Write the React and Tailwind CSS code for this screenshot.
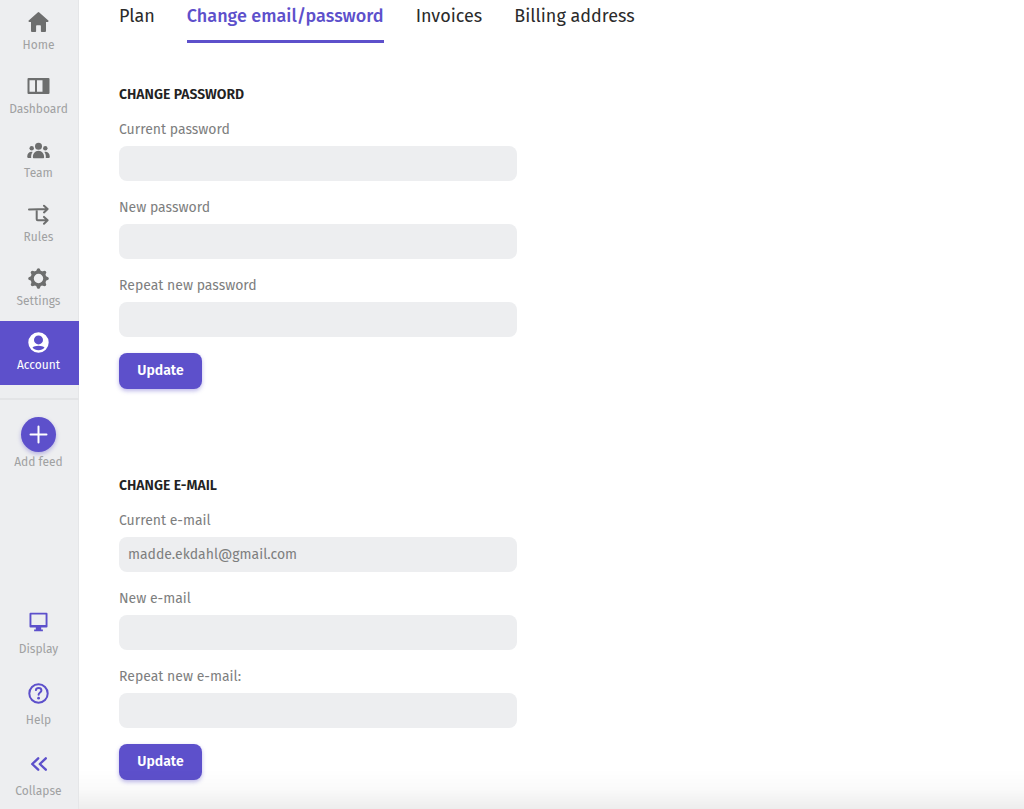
import React, { useId } from "react";

function HomeIcon() {
  return (
    <svg width="21" height="21" viewBox="0 0 21 21" fill="currentColor" aria-hidden="true">
      <path d="M9.7 .4a1.2 1.2 0 0 1 1.600 0l9 8c.6.6.3 1.500-.5 1.500H18v9.200a1 1 0 0 1-1 1h-3.300a.8.8 0 0 1-.8-.8v-5.200a.8.8 0 0 0-.8-.8H8.900a.8.8 0 0 0-.8.8v5.200a.8.8 0 0 1-.8.8H4a1 1 0 0 1-1-1V9.900H1.200c-.8 0-1.100-.9-.5-1.500z" />
    </svg>
  );
}

function DashboardIcon() {
  return (
    <svg width="23" height="20" viewBox="0 0 23 20" fill="currentColor" aria-hidden="true">
      <path
        fillRule="evenodd"
        d="M1.500 2h20a1 1 0 0 1 1 1v14a1 1 0 0 1-1 1h-20a1 1 0 0 1-1-1V3a1 1 0 0 1 1-1zM2.500 4.300v11.400H8V4.300zM10 4.300v11.400h5.500V4.300z"
      />
    </svg>
  );
}

function TeamIcon() {
  return (
    <svg width="23" height="20" viewBox="0 -1 23 20" fill="currentColor" aria-hidden="true">
      <circle cx="11.500" cy="5.200" r="3.500" />
      <circle cx="4.700" cy="7.300" r="2.200" />
      <circle cx="18.300" cy="7.300" r="2.200" />
      <path d="M5.900 16.200C5.700 12.800 8 9.800 11.500 9.800s5.800 3 5.600 6.400c0 .7-.4 1-1 1H6.900c-.6 0-1-.3-1-1z" />
      <path d="M5.600 10.900C3 10.300.2 12 .2 15.700c0 .8.4 1.200 1 1.200h3c-.2-2.400.2-4.400 1.400-6z" />
      <path d="M17.400 10.900c2.600-.6 5.400 1.100 5.400 4.800 0 .8-.4 1.200-1 1.200h-3c.2-2.400-.2-4.400-1.400-6z" />
    </svg>
  );
}

function RulesIcon() {
  return (
    <svg
      width="21"
      height="21"
      viewBox="0 0 21 21"
      fill="none"
      stroke="currentColor"
      strokeWidth="2"
      strokeLinecap="round"
      strokeLinejoin="round"
      aria-hidden="true"
    >
      <path d="M1 5.500 19.500 5M16 1.700 19.600 5 16 8.400M8.700 5.500v9.800a1 1 0 0 0 1 1h9.800M16 12.900l3.600 3.400-3.600 3.400" />
    </svg>
  );
}

function SettingsIcon() {
  return (
    <svg width="21" height="21" viewBox="-10.500 -10.500 21 21" fill="currentColor" aria-hidden="true">
      <circle r="6.300" fill="none" stroke="currentColor" strokeWidth="3.200" />
      {[0, 45, 90, 135, 180, 225, 270, 315].map((angle) => (
        <path
          key={angle}
          transform={`rotate(${angle})`}
          d="M-2.600-6.800-1.300-9.700Q0-10.900 1.300-9.700L2.600-6.800z"
        />
      ))}
    </svg>
  );
}

function AccountIcon() {
  return (
    <svg width="21" height="21" viewBox="0 0 21 21" fill="currentColor" aria-hidden="true">
      <path
        fillRule="evenodd"
        d="M10.500.3a10.200 10.200 0 1 1 0 20.400 10.200 10.200 0 0 1 0-20.400zM10.500 3.400a4.500 4.500 0 1 0 0 9 4.500 4.500 0 0 0 0-9zM4.500 15.600c1.300 1.700 3.500 2.700 6 2.700s4.700-1 6-2.700c-1-1.200-3.500-1.900-6-1.900s-5 .7-6 1.900z"
      />
    </svg>
  );
}

function PlusIcon() {
  return (
    <svg
      width="19"
      height="19"
      viewBox="0 0 19 19"
      stroke="currentColor"
      strokeWidth="2"
      strokeLinecap="round"
      aria-hidden="true"
    >
      <path d="M9.500 1.500v16M1.500 9.500h16" />
    </svg>
  );
}

function DisplayIcon() {
  return (
    <svg width="19" height="20" viewBox="0 0 19 20" fill="currentColor" aria-hidden="true">
      <path
        fillRule="evenodd"
        d="M1.500.7h16a1 1 0 0 1 1 1v12.800a1 1 0 0 1-1 1h-5.300v1.900h1.700v1.900H5.100v-1.900h1.700v-1.900H1.500a1 1 0 0 1-1-1V1.700a1 1 0 0 1 1-1zM2.400 2.600v10.400h14.200V2.600z"
      />
    </svg>
  );
}

function HelpIcon() {
  return (
    <svg
      width="21"
      height="21"
      viewBox="0 0 21 21"
      fill="none"
      stroke="currentColor"
      strokeWidth="2"
      strokeLinecap="round"
      aria-hidden="true"
    >
      <circle cx="10.500" cy="10.500" r="9.200" />
      <path d="M7.900 7.100c.2-1.200 1.200-2 2.700-2 1.600 0 2.800.9 2.800 2.400 0 2-2.800 2-2.800 4.200" />
      <circle cx="10.600" cy="15.200" r="1.400" fill="currentColor" stroke="none" />
    </svg>
  );
}

function CollapseIcon() {
  return (
    <svg
      width="19"
      height="20"
      viewBox="0 0 19 20"
      fill="none"
      stroke="currentColor"
      strokeWidth="2.400"
      strokeLinecap="round"
      strokeLinejoin="round"
      aria-hidden="true"
    >
      <path d="M9.200 4.300 3.200 10l6 5.700M16.800 4.300l-6 5.700 6 5.700" />
    </svg>
  );
}

const navItems = [
  { label: "Home", Icon: HomeIcon },
  { label: "Dashboard", Icon: DashboardIcon },
  { label: "Team", Icon: TeamIcon },
  { label: "Rules", Icon: RulesIcon },
  { label: "Settings", Icon: SettingsIcon },
  { label: "Account", Icon: AccountIcon, active: true },
];

const footerItems = [
  { label: "Display", Icon: DisplayIcon },
  { label: "Help", Icon: HelpIcon },
  { label: "Collapse", Icon: CollapseIcon },
];

const tabs = ["Plan", "Change email/password", "Invoices", "Billing address"];

function Sidebar() {
  return (
    <aside className="flex w-[79px] shrink-0 flex-col bg-[#edeef0] text-xs leading-4 shadow-[inset_-1px_0_0_#e5e6e8]">
      <nav aria-label="Main" className="flex flex-col pt-px">
        {navItems.map(({ label, Icon, active }) => (
          <a
            key={label}
            href="#"
            aria-current={active ? "page" : undefined}
            className={
              active
                ? "flex h-16 flex-col items-center gap-[5px] bg-[#5d50cb] pt-[11px] pr-0.5 text-white"
                : "flex h-16 flex-col items-center gap-[5px] pt-[11px] pr-0.5 text-[#6d6e6e]"
            }
          >
            <span className="flex h-5 items-center">
              <Icon />
            </span>
            <span className={active ? "text-white" : "text-[#a0a1a2]"}>{label}</span>
          </a>
        ))}
      </nav>
      <div className="mt-[13px] flex flex-col items-center border-t-2 border-[#e3e4e6] pt-[17px] pr-0.5">
        <button type="button" className="flex flex-col items-center text-[#a0a1a2]">
          <span className="flex size-[35px] items-center justify-center rounded-full bg-[#5d50cb] text-white shadow-[0_2px_4px_rgba(93,80,203,0.4)]">
            <PlusIcon />
          </span>
          <span className="mt-0.5">Add feed</span>
        </button>
      </div>
      <div className="mt-auto flex flex-col gap-[26px] pr-0.5 pb-2.5">
        {footerItems.map(({ label, Icon }) => (
          <button key={label} type="button" className="flex flex-col items-center gap-[9px] text-[#5d50cb]">
            <span className="flex h-5 items-center">
              <Icon />
            </span>
            <span className="text-[#a0a1a2]">{label}</span>
          </button>
        ))}
      </div>
    </aside>
  );
}

function Field({ label, type, defaultValue }) {
  const id = useId();
  return (
    <div className="flex flex-col gap-1.5">
      <label htmlFor={id} className="text-sm leading-5 text-[#7d7e7e]">
        {label}
      </label>
      <input
        id={id}
        type={type}
        defaultValue={defaultValue}
        className="h-[35px] w-full rounded-lg bg-[#edeef0] px-[9px] text-sm text-[#7d7e7e] outline-none"
      />
    </div>
  );
}

function Section({ title, type, fields }) {
  return (
    <form className="flex max-w-[398px] flex-col items-start">
      <h2 className="text-sm leading-5 font-semibold text-[#222] uppercase">{title}</h2>
      <div className="mt-[15px] flex w-full flex-col gap-[17px]">
        {fields.map((field) => (
          <Field key={field.label} type={type} {...field} />
        ))}
      </div>
      <button
        type="button"
        className="mt-4 h-9 w-[83px] rounded-lg bg-[#5d50cb] text-sm font-semibold text-white shadow-[0_2px_4px_rgba(93,80,203,0.4)]"
      >
        Update
      </button>
    </form>
  );
}

export default function App() {
  return (
    <div className="flex min-h-screen bg-white font-['Fira_Sans','Noto_Sans',sans-serif]">
      <Sidebar />
      <main className="flex min-w-0 flex-1 flex-col px-10">
        <nav aria-label="Account" className="flex gap-8 text-lg leading-6 text-[#2b2b2b]">
          {tabs.map((tab, index) => (
            <a
              key={tab}
              href="#"
              aria-current={index === 1 ? "page" : undefined}
              className={
                index === 1
                  ? "border-b-3 border-[#5d50cb] pt-1 pb-3 font-medium text-[#5d50cb]"
                  : "border-b-3 border-transparent pt-1 pb-3"
              }
            >
              {tab}
            </a>
          ))}
        </nav>
        <div className="mt-[42px] flex flex-col gap-[87px] pb-7">
          <Section
            title="Change password"
            type="password"
            fields={[
              { label: "Current password" },
              { label: "New password" },
              { label: "Repeat new password" },
            ]}
          />
          <Section
            title="Change e-mail"
            type="email"
            fields={[
              { label: "Current e-mail", defaultValue: "madde.ekdahl@gmail.com" },
              { label: "New e-mail" },
              { label: "Repeat new e-mail:" },
            ]}
          />
        </div>
      </main>
      <div className="pointer-events-none fixed right-0 bottom-0 left-[79px] h-10 bg-linear-to-t from-black/7 via-black/2 to-transparent" />
    </div>
  );
}
